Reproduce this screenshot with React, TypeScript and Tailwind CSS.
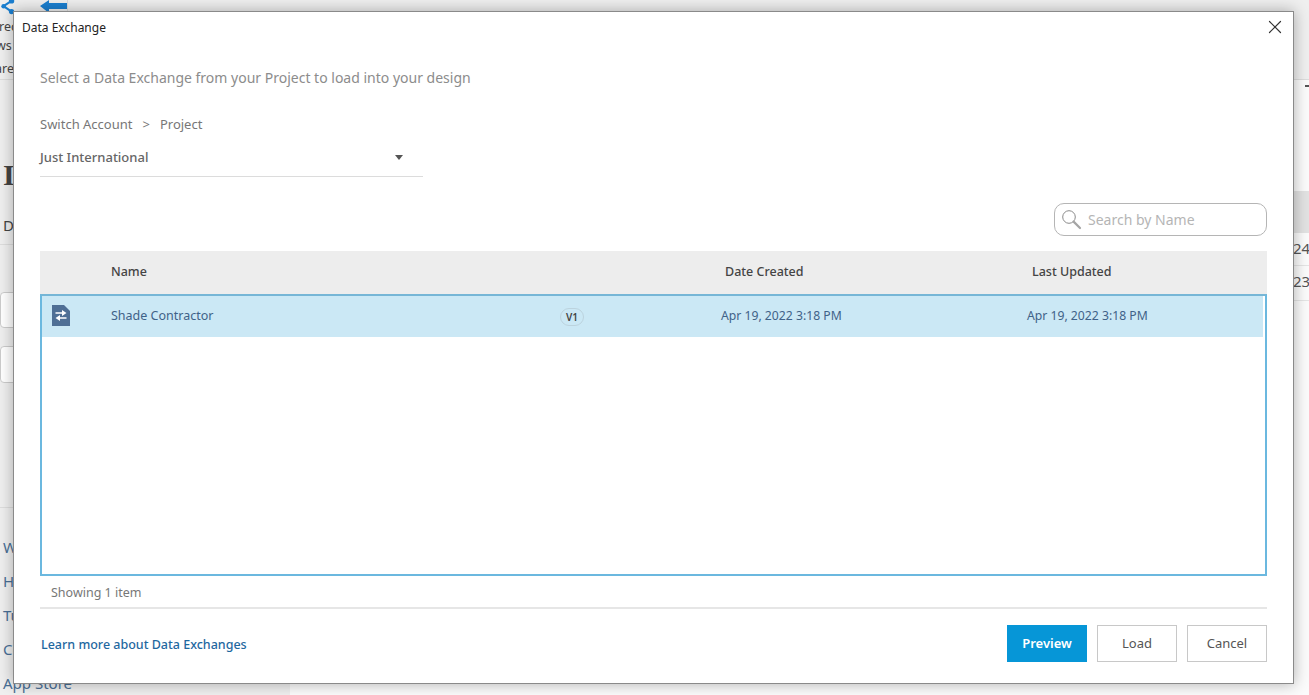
import { X } from 'lucide-react';

const FONT = "font-['Noto_Sans','Open_Sans',sans-serif]";

const ExchangeIcon = () => (
  <svg width="18" height="21" viewBox="0 0 18 21" className="block -translate-y-px">
    <path d="M0 0h12l6 6v15H0z" fill="#4f6f95" />
    <path d="M3.5 7.2H10V5l4.5 3-4.5 3V8.8H3.5zM14.5 12.2H8V10l-4.5 3L8 16v-2.2h6.5z" fill="#fff" />
  </svg>
);

const SearchIcon = () => (
  <svg width="20" height="20" viewBox="0 0 20 20" className="shrink-0">
    <circle cx="7" cy="7" r="6.3" fill="none" stroke="#8a8a8a" strokeWidth="1" />
    <path d="M11.6 11.6 18 18" stroke="#a5a5a5" strokeWidth="2.2" strokeLinecap="round" />
  </svg>
);

const Backdrop = () => (
  <div className="flex h-[695px] flex-col overflow-hidden bg-[#fbfbfb]">
    <div className="flex h-[80px] shrink-0 border-b border-[#dcdcdc] bg-[#efefef]">
      <div className="flex w-[68px] shrink-0 flex-col border-r border-[#dcdcdc] pl-0 text-[12.5px] text-[#444]">
        <svg width="16" height="18" viewBox="0 0 16 18">
          <circle cx="3" cy="7" r="2.5" fill="#1b7fd0" />
          <circle cx="12" cy="1" r="3" fill="#1b7fd0" />
          <circle cx="12" cy="13" r="3" fill="#1b7fd0" />
          <path d="M3 7 12 1M3 7l9 6" stroke="#1b7fd0" strokeWidth="2.4" fill="none" />
        </svg>
        <span className="mt-[1px] -ml-px leading-[20px]">rec</span>
        <span className="-ml-[4px] leading-[18px]">ws</span>
        <span className="mt-[4px] -ml-[5px] leading-[20px]">are</span>
      </div>
      <svg width="28" height="13" viewBox="0 0 28 13" className="ml-[-28px]">
        <path d="M0 6 9 0v3h18v6H9v4z" fill="#1b7fd0" />
      </svg>
    </div>
    <div className="flex min-h-0 flex-1">
      <div className="flex w-[290px] shrink-0 flex-col bg-[#efefef] text-[#4a6f96]">
        <div className="pl-[3px] pt-[80px] font-['Liberation_Serif',serif] text-[30px] font-bold leading-none text-[#444]">I</div>
        <div className="mt-[24px] border-b border-[#ddd] pb-[7px] pl-[3px] text-[15px] text-[#444]">D</div>
        <div className="mt-[47px] h-[37px] w-[60px] rounded-sm border border-[#ccc] bg-white" />
        <div className="mt-[18px] h-[38px] w-[60px] rounded-sm border border-[#ccc] bg-white" />
        <div className="mt-[124px] flex flex-col gap-[10px] border-t border-[#ddd] pl-[3px] pt-[27px] text-[15px] leading-[24px]">
          <span>W</span>
          <span>H</span>
          <span>Tu</span>
          <span>Co</span>
          <span>App Store</span>
        </div>
      </div>
      <div className="flex flex-1 flex-col items-end pt-[5px] text-[15px] text-[#555]">
        <div className="h-[2px] w-[4px] bg-[#555]" />
        <div className="mt-[104px] h-[42px] w-[16px] bg-[#e2e2e2]" />
        <div className="h-[33px] w-[16px] border-b border-[#e5e5e5] pt-[4px]">24</div>
        <div className="h-[35px] w-[16px] border-b border-[#e5e5e5] pt-[4px]">23</div>
      </div>
    </div>
  </div>
);

export default function App() {
  return (
    <div className={`relative h-[695px] w-[1309px] overflow-hidden ${FONT}`}>
      <Backdrop />
      <div className="absolute left-[13px] top-[11px] flex h-[673px] w-[1281px] flex-col border border-[#8a8a8a] bg-white px-[26px] shadow-[0_0_14px_rgba(0,0,0,0.3)]">
        <div className="absolute left-[8px] top-[7px] text-[12px] leading-[18px] text-[#222]">Data Exchange</div>
        <X className="absolute right-[7px] top-[4px] h-[22px] w-[22px] text-[#333]" strokeWidth={1.3} />

        <p className="mt-[56px] text-[14px] leading-[20px] text-[#8c8c8c]">
          Select a Data Exchange from your Project to load into your design
        </p>

        <div className="mt-[27px] flex gap-[10px] text-[13px] leading-[18px] text-[#777]">
          <span>Switch Account</span>
          <span>&gt;</span>
          <span>Project</span>
        </div>

        <div className="mt-[15px] flex h-[29px] w-[383px] items-start justify-between border-b border-[#dcdcdc] pr-[20px] text-[13px] leading-[18px] text-[#666]">
          <span className="font-medium">Just International</span>
          <span className="mt-[7px] h-0 w-0 border-x-[4px] border-t-[5px] border-x-transparent border-t-[#555]" />
        </div>

        <div className="mt-[26px] flex justify-end">
          <div className="flex h-[33px] w-[213px] items-center gap-[6px] rounded-[10px] border border-[#b5b5b5] pl-[7px]">
            <SearchIcon />
            <span className="text-[14px] text-[#b5b5b5]">Search by Name</span>
          </div>
        </div>

        <div className="mt-[15px] grid h-[43px] grid-cols-[71px_614px_307px_1fr] items-center bg-[#ededed] text-[12.5px] font-medium text-[#444]">
          <span />
          <span>Name</span>
          <span>Date Created</span>
          <span>Last Updated</span>
        </div>

        <div className="h-[282px] border-2 border-[#6bb8df] border-t-[#76b6d6]">
          <div className="mr-[2px] grid h-[41px] grid-cols-[69px_449px_161px_306px_1fr] items-center bg-[#cbe8f5] text-[12.5px] text-[#3f6288]">
            <span className="pl-[10px]"><ExchangeIcon /></span>
            <span>Shade Contractor</span>
            <span className="flex justify-start">
              <span className="rounded-full border border-[#bcd3de] px-[5px] text-[10px] font-semibold leading-[16px] text-[#444]">V1</span>
            </span>
            <span className="text-[12.2px]">Apr 19, 2022 3:18 PM</span>
            <span className="text-[12.2px]">Apr 19, 2022 3:18 PM</span>
          </div>
        </div>

        <div className="h-[33px] border-b-2 border-[#e6e6e6] pl-[11px] pt-[8px] text-[12.5px] leading-[18px] text-[#777]">Showing 1 item</div>

        <div className="mt-[16px] flex items-center justify-between">
          <a className="pl-[1px] pt-[4px] text-[12.5px] font-medium text-[#1f689f]">Learn more about Data Exchanges</a>
          <div className="flex gap-[10px] text-[13px]">
            <button className="h-[37px] w-[80px] bg-[#0696d7] font-semibold text-white">Preview</button>
            <button className="h-[37px] w-[80px] border border-[#c8c8c8] text-[#555]">Load</button>
            <button className="h-[37px] w-[80px] border border-[#c8c8c8] text-[#555]">Cancel</button>
          </div>
        </div>
      </div>
    </div>
  );
}
